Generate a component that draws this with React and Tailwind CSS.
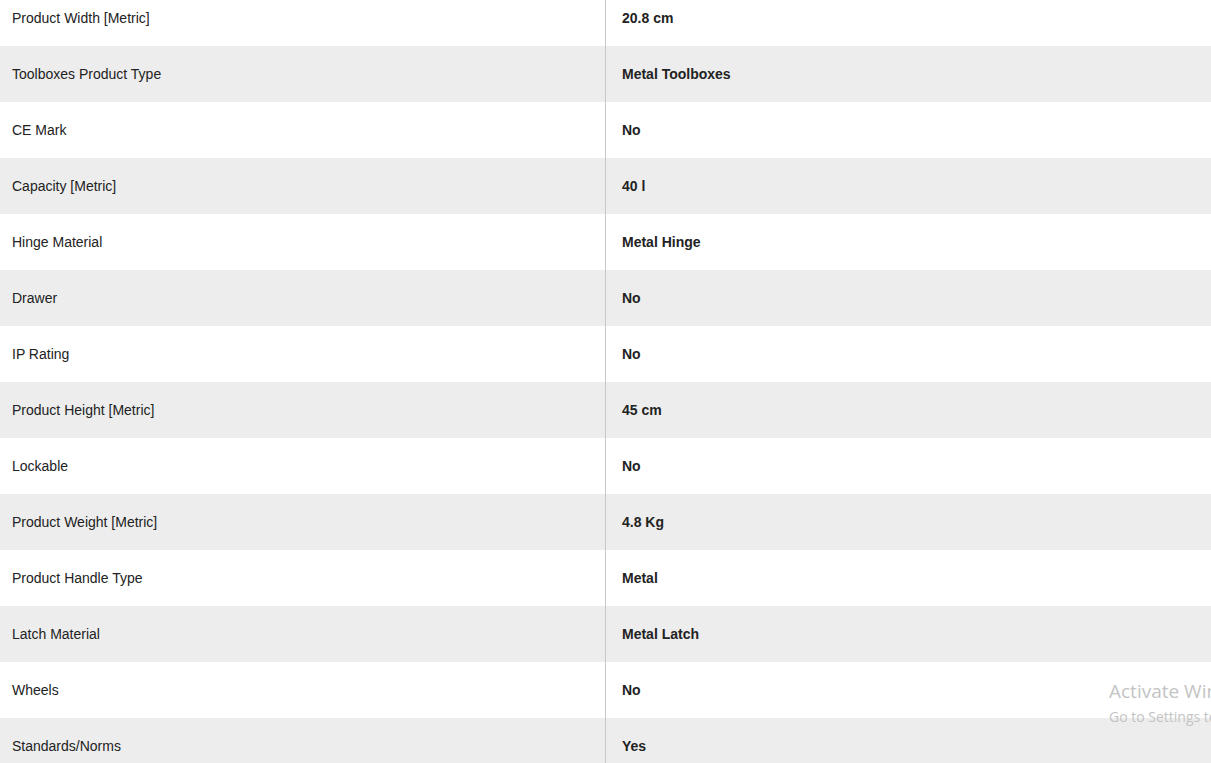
const rows = [
  ["Product Width [Metric]", "20.8 cm"],
  ["Toolboxes Product Type", "Metal Toolboxes"],
  ["CE Mark", "No"],
  ["Capacity [Metric]", "40 l"],
  ["Hinge Material", "Metal Hinge"],
  ["Drawer", "No"],
  ["IP Rating", "No"],
  ["Product Height [Metric]", "45 cm"],
  ["Lockable", "No"],
  ["Product Weight [Metric]", "4.8 Kg"],
  ["Product Handle Type", "Metal"],
  ["Latch Material", "Metal Latch"],
  ["Wheels", "No"],
  ["Standards/Norms", "Yes"],
];

export default function App() {
  return (
    <div className="relative w-[1211px] h-[763px] overflow-hidden bg-white text-[14px] text-[#222]" style={{ fontFamily: '"Liberation Sans", Arial, sans-serif' }}>
      <div className="-mt-[10px] flex flex-col">
        {rows.map(([k, v], i) => (
          <div key={k} className={`flex h-[56px] ${i % 2 === 1 ? "bg-[#ededed]" : "bg-white"}`}>
            <div className="w-[606px] shrink-0 flex items-center pl-[12px] border-r border-[#c8c8c8]">{k}</div>
            <div className="flex-1 flex items-center pl-[16px] font-bold">{v}</div>
          </div>
        ))}
      </div>
      <div className="absolute left-[1109px] top-[682px] whitespace-nowrap text-[#c4c4c4] leading-none" style={{ fontFamily: '"Open Sans", "Noto Sans", sans-serif' }}>
        <div className="text-[19px]">Activate Windows</div>
        <div className="text-[14px] mt-[9px]">Go to Settings to activate Windows.</div>
      </div>
    </div>
  );
}
